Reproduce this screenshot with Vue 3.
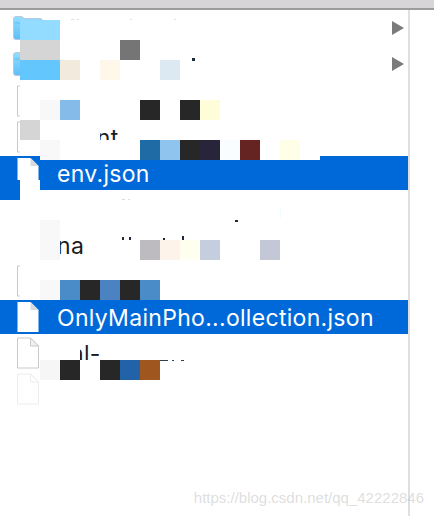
<script setup>
// file list rows, 36px pitch
const rows = [
  { type: 'folder', name: '', arrow: true },
  { type: 'folder', name: '', arrow: true },
  { type: 'file', name: '' },
  { type: 'file', name: 'event' },
  { type: 'file', name: 'env.json', selected: true },
  { type: 'none', name: '' },
  { type: 'none', name: 'na' },
  { type: 'file', name: '' },
  { type: 'file', name: 'OnlyMainPho...ollection.json', selected: true },
  { type: 'file', name: 'cal-l' },
  { type: 'file', name: '', faint: true }
]

// pixelated redaction blocks: x, y, w, h, colour
const blocks = [
  [20, 20, 40, 20, '#93dcff'],
  [20, 40, 40, 20, '#d5d5d5'],
  [120, 40, 20, 20, '#757575'],
  [20, 60, 40, 20, '#63c7fd'],
  [60, 60, 20, 20, '#f2ebdd'],
  [100, 60, 20, 20, '#fff7ea'],
  [160, 60, 20, 20, '#dce9f3'],
  [20, 84, 20, 36, '#fff'],
  [40, 100, 20, 20, '#f8f8f8'],
  [60, 100, 20, 20, '#85bbe9'],
  [140, 100, 20, 20, '#272727'],
  [180, 100, 20, 20, '#272727'],
  [200, 100, 20, 20, '#fffcd8'],
  [20, 120, 20, 20, '#d5d5d5'],
  [40, 120, 60, 20, '#fff'],
  [20, 140, 20, 16, '#fff'],
  [40, 140, 280, 20, '#fff'],
  [40, 140, 20, 20, '#f8f8f8'],
  [140, 140, 20, 20, '#1f6ba6'],
  [160, 140, 20, 20, '#8fc4ef'],
  [180, 140, 20, 20, '#272727'],
  [200, 140, 20, 20, '#28253a'],
  [220, 140, 20, 20, '#f9fdff'],
  [240, 140, 20, 20, '#652321'],
  [280, 140, 20, 20, '#ffffe8'],
  [20, 180, 20, 20, '#fff'],
  [0, 180, 20, 20, '#0069d9'],
  [40, 220, 20, 40, '#f8f8f8'],
  [140, 240, 20, 20, '#bdbbc0'],
  [160, 240, 20, 20, '#fdf3ea'],
  [180, 240, 20, 20, '#fffff0'],
  [200, 240, 20, 20, '#c4cede'],
  [260, 240, 20, 20, '#c4c8d6'],
  [20, 264, 20, 36, '#fff'],
  [40, 280, 20, 20, '#f8f8f8'],
  [60, 280, 20, 20, '#4a8cc7'],
  [80, 280, 20, 20, '#272727'],
  [100, 280, 20, 20, '#4a82c2'],
  [120, 280, 20, 20, '#272727'],
  [140, 280, 20, 20, '#4a8cc7'],
  [40, 336, 40, 24, '#fff'],
  [100, 336, 100, 24, '#fff'],
  [40, 360, 20, 20, '#f6f6f6'],
  [60, 360, 20, 20, '#272727'],
  [80, 360, 20, 20, '#fff'],
  [100, 360, 20, 20, '#272727'],
  [120, 360, 20, 20, '#2262a9'],
  [140, 360, 20, 20, '#a0561f'],
  // bits of hidden names that stick out of the blocks
  [71, 19, 3, 1, '#ddd'],
  [77, 19, 2, 1, '#ddd'],
  [130, 19, 2, 1, '#ddd'],
  [174, 19, 2, 1, '#ddd'],
  [192, 58, 3, 3, '#1d2a3a'],
  [122, 199, 3, 1, '#ddd'],
  [128, 199, 2, 1, '#ddd'],
  [280, 208, 1, 10, '#f0fbff'],
  [235, 220, 3, 2, '#1d2a3a'],
  [122, 237, 2, 3, '#2a2a2a'],
  [129, 237, 2, 3, '#1d2a3a'],
  [163, 238, 2, 2, '#1d2a3a'],
  [182, 236, 2, 4, '#1d2a3a'],
  [160, 360, 8, 1, '#33404e'],
  [172, 360, 2, 1, '#33404e'],
  [181, 360, 3, 1, '#33404e']
]

const blockStyle = ([x, y, w, h, c]) => ({
  left: x + 'px',
  top: y + 'px',
  width: w + 'px',
  height: h + 'px',
  background: c
})
</script>

<template>
  <div class="finder">
    <div class="titlebar"></div>
    <div class="panes">
      <div class="list">
        <div
          v-for="(row, i) in rows"
          :key="i"
          class="row"
          :class="{ selected: row.selected, faint: row.faint }"
        >
          <div class="slot">
            <svg v-if="row.type === 'folder'" class="folder" width="30" height="24" viewBox="0 0 30 24">
              <defs>
                <linearGradient :id="'fg' + i" x1="0" y1="0" x2="0" y2="1">
                  <stop offset="0" stop-color="#93dcff" />
                  <stop offset="1" stop-color="#5cbff8" />
                </linearGradient>
              </defs>
              <path
                d="M.5 3Q.5 .5 3 .5H8Q10 .5 11 2.5H27Q29.5 2.5 29.5 5V21Q29.5 23.5 27 23.5H3Q.5 23.5 .5 21Z"
                :fill="'url(#fg' + i + ')'"
                stroke="#b9c9d6"
              />
              <path d="M1.5 7H28.5" stroke="#5cbff8" fill="none" />
            </svg>
            <svg v-else-if="row.type === 'file'" class="doc" width="24" height="32" viewBox="0 0 24 32">
              <path class="sheet" d="M1.5 1H14.5L22.5 9V31H1.5Z" />
              <path class="fold" d="M14.5 1V9H22.5Z" />
            </svg>
          </div>
          <span class="name">{{ row.name }}</span>
          <svg v-if="row.arrow" class="arrow" width="12" height="14" viewBox="0 0 12 14">
            <path d="M0 0L12 7L0 14Z" fill="#7b7b7b" />
          </svg>
        </div>
      </div>
    </div>
    <i v-for="(b, i) in blocks" :key="'b' + i" class="block" :style="blockStyle(b)"></i>
    <div class="watermark">https://blog.csdn.net/qq_42222846</div>
  </div>
</template>

<style scoped>
.finder {
  position: relative;
  width: 434px;
  height: 516px;
  overflow: hidden;
  background: #fff;
  font-family: Inter, "Liberation Sans", sans-serif;
}

.titlebar {
  height: 8px;
  background: #d8d5d9;
  border-bottom: 2px solid #9b9b9b;
}

.panes {
  display: flex;
  height: 506px;
}

.list {
  display: flex;
  flex-direction: column;
  gap: 2px;
  width: 408px;
  padding-top: 2px;
  border-right: 2px solid #dfdfdf;
}

.row {
  display: flex;
  flex: none;
  height: 34px;
  padding: 0 4px 0 16px;
  color: #1c1c1c;
}

.row.selected {
  background: #0069d9;
  color: #fff;
}

.slot {
  flex: none;
  width: 24px;
  margin-right: 17px;
}

.folder {
  display: block;
  margin: 4px 0 0 -3px;
}

.doc {
  display: block;
  margin-top: 1px;
}

.sheet {
  fill: #fff;
  stroke: #c9c9c9;
  stroke-width: 1;
}

.fold {
  fill: #f0f0f0;
  stroke: #c9c9c9;
  stroke-width: 1;
}

.selected .sheet {
  stroke: none;
}

.selected .fold {
  fill: #d6dbe2;
  stroke: none;
}

.faint .sheet,
.faint .fold {
  stroke: #ececec;
  fill: #fff;
}

.name {
  font-size: 23px;
  letter-spacing: 0.3px;
  line-height: 36px;
  white-space: nowrap;
}

.arrow {
  flex: none;
  margin: 9px 0 0 auto;
}

.block {
  position: absolute;
  display: block;
}

.watermark {
  position: absolute;
  right: 10px;
  top: 488px;
  font-family: "Liberation Sans", Arial, sans-serif;
  font-size: 15px;
  line-height: 20px;
  color: rgba(170, 170, 170, 0.4);
  white-space: nowrap;
}
</style>
